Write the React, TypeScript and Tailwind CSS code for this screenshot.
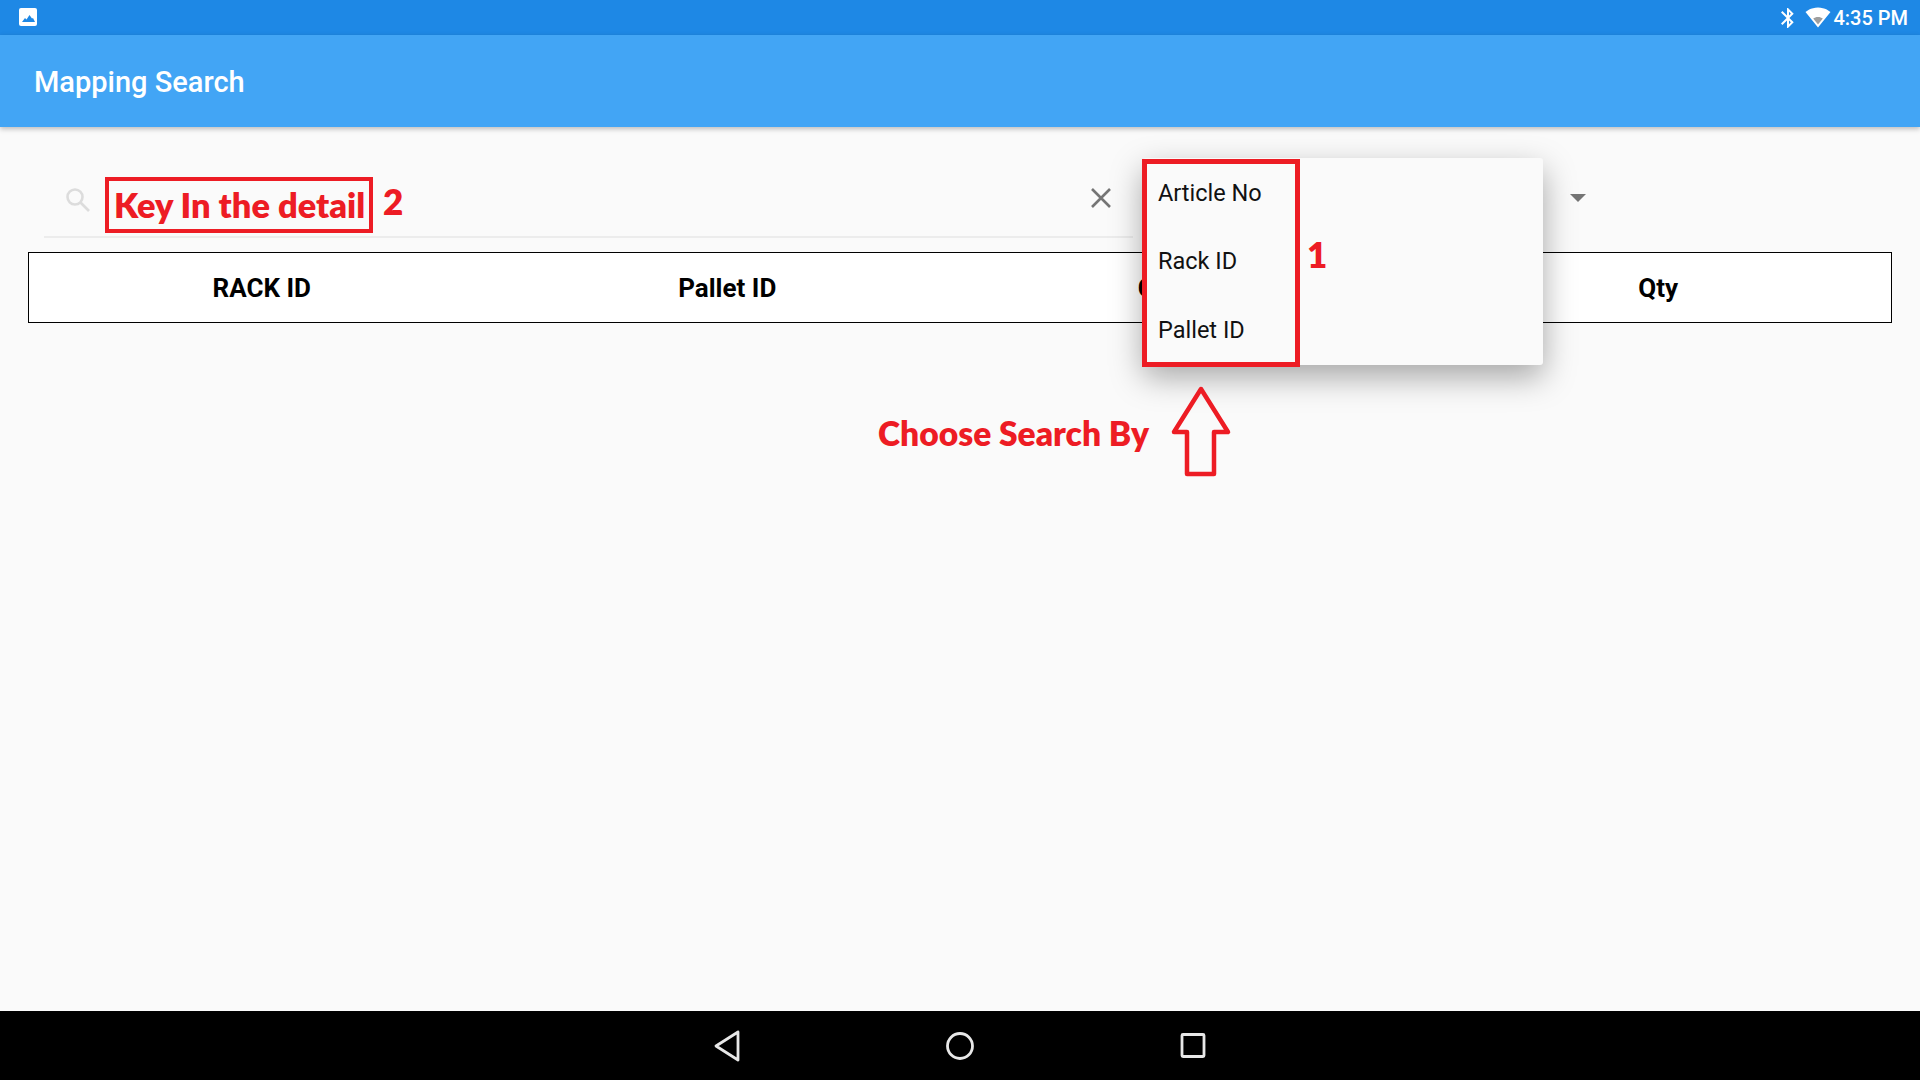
const headers = ["RACK ID", "Pallet ID", "Carton ID", "Qty"];
const menuItems = ["Article No", "Rack ID", "Pallet ID"];

function StatusBar() {
  return (
    <div className="h-[35px] shrink-0 bg-[#1e88e5] flex items-center justify-between pl-[19px] pr-[12px]">
      <svg width="18" height="18" viewBox="0 0 18 18" className="mb-[1px]">
        <rect width="18" height="18" rx="2" fill="#fff" />
        <path d="M3 14 L6 10 L7.5 11.5 L10.5 7 L13 10.5 L14 10 L16 14 Z" fill="#1e88e5" />
      </svg>
      <div className="flex items-center text-white">
        <svg width="24" height="24" viewBox="0 0 24 24" fill="#fff" className="mr-[5px]">
          <path d="M17.71 7.71L12 2h-1v7.59L6.41 5 5 6.41 10.59 12 5 17.59 6.41 19 11 14.41V22h1l5.71-5.71-4.3-4.29 4.3-4.29zM13 5.83l1.88 1.88L13 9.59V5.83zm1.88 10.46L13 18.17v-3.76l1.88 1.88z" />
        </svg>
        <svg width="26" height="21" viewBox="0 0 26 21" className="mr-[2px]">
          <path d="M13 20.5 L25.5 5 C25 4.6 20.2 0.5 13 0.5 C5.8 0.5 1 4.6 0.5 5 Z" fill="#fff" />
          <path d="M13 17.5 L8.2 11.5 C9.5 10.6 11 10 13 10 C15 10 16.5 10.6 17.8 11.5 Z" fill="#9e9e9e" />
        </svg>
        <span className="font-['Roboto',sans-serif] font-medium text-[20px] leading-none">4:35 PM</span>
      </div>
    </div>
  );
}

function AppBar() {
  return (
    <div className="relative z-10 h-[92px] shrink-0 bg-[#42a5f5] flex items-center pl-[34px] pt-[2px] shadow-[0_2px_5px_rgba(0,0,0,0.25)]">
      <h1 className="font-['Roboto',sans-serif] font-medium text-[29px] text-white leading-none">Mapping Search</h1>
    </div>
  );
}

function SearchRow() {
  return (
    <div className="flex h-[110px] pl-[44px] items-start">
      <div className="w-[1089px] h-[111px] border-b-2 border-[#ececec] flex items-start justify-between pl-[21px] pr-[21px] pt-[60px]">
        <svg width="26" height="26" viewBox="0 0 26 26" fill="none" stroke="#dcdcdc" strokeWidth="2.6">
          <circle cx="10" cy="10" r="7.5" />
          <path d="M15.5 15.5 L24 24" />
        </svg>
        <svg width="22" height="22" viewBox="0 0 22 22" stroke="#757575" strokeWidth="2.6">
          <path d="M2 2 L20 20 M20 2 L2 20" />
        </svg>
      </div>
      <div className="ml-[437px] mt-[67px] w-0 h-0 border-x-[8px] border-x-transparent border-t-[8px] border-t-[#757575]" />
    </div>
  );
}

function HeaderTable() {
  return (
    <div className="mx-[28px] mt-[15px] h-[71px] bg-white border border-black grid grid-cols-4 items-center">
      {headers.map((h) => (
        <div key={h} className="pt-[1px] text-center font-['Roboto',sans-serif] font-bold text-[26px] text-black">
          {h}
        </div>
      ))}
    </div>
  );
}

function SearchByMenu() {
  return (
    <div className="absolute left-[1143px] top-[31px] w-[400px] h-[207px] bg-[#fafafa] rounded-[3px] shadow-[0_12px_32px_rgba(0,0,0,0.34)] flex flex-col pl-[15px] pt-[1px]">
      {menuItems.map((item) => (
        <div key={item} className="h-[69.5px] flex items-center font-['Roboto',sans-serif] text-[23.5px] text-[#111]">
          {item}
        </div>
      ))}
    </div>
  );
}

function Annotations() {
  const labelFont = "font-['Lato',sans-serif] font-extrabold text-[#ed1c24] leading-none";
  return (
    <>
      <div className="absolute left-[105px] top-[50px] w-[268px] h-[56px] border-[4px] border-[#ed1c24] flex items-center pl-[5px]">
        <span className={`${labelFont} text-[34.4px] whitespace-nowrap`}>Key In the detail</span>
      </div>
      <span className={`absolute left-[383px] top-[57px] ${labelFont} text-[35px]`}>2</span>
      <div className="absolute left-[1142px] top-[32px] w-[158px] h-[208px] border-[5px] border-[#ed1c24]" />
      <span className={`absolute left-[1307px] top-[110px] ${labelFont} text-[35px]`}>1</span>
      <span className={`absolute left-[878px] top-[290px] ${labelFont} text-[33.6px] whitespace-nowrap`}>Choose Search By</span>
      <svg width="62" height="96" viewBox="0 0 62 96" className="absolute left-[1170px] top-[257px]">
        <path d="M31 5 L58 48 L44 48 L44 90 L17 90 L17 48 L4 48 Z" fill="none" stroke="#ed1c24" strokeWidth="4.5" strokeLinejoin="round" />
      </svg>
    </>
  );
}

function NavBar() {
  return (
    <div className="h-[69px] shrink-0 bg-black flex items-center justify-center gap-[191px]">
      <svg width="42" height="42" viewBox="0 0 42 42" fill="none" stroke="#e8e8e8" strokeWidth="2.8" strokeLinejoin="round">
        <path d="M32 7 L10 21 L32 35 Z" />
      </svg>
      <svg width="42" height="42" viewBox="0 0 42 42" fill="none" stroke="#e8e8e8" strokeWidth="2.8">
        <circle cx="21" cy="21" r="12.5" />
      </svg>
      <svg width="42" height="42" viewBox="0 0 42 42" fill="none" stroke="#e8e8e8" strokeWidth="2.8" strokeLinejoin="round">
        <rect x="10" y="9.5" width="22" height="22" rx="1" />
      </svg>
    </div>
  );
}

export default function App() {
  return (
    <div className="w-[1920px] h-[1080px] flex flex-col overflow-hidden bg-[#fafafa]">
      <StatusBar />
      <AppBar />
      <main className="relative flex-1">
        <SearchRow />
        <HeaderTable />
        <SearchByMenu />
        <Annotations />
      </main>
      <NavBar />
    </div>
  );
}
